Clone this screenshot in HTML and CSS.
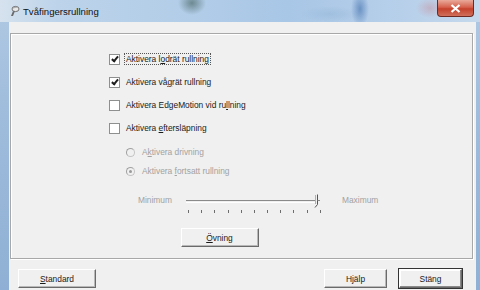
FILE: index.html
```html
<!DOCTYPE html>
<html lang="sv">
<head>
    <meta charset="UTF-8">
    <title>Tvåfingersrullning</title>
    <link rel="stylesheet" href="styles.css">
</head>
<body>

    <div class="window">
        <div class="titlebar">
            <svg class="app-icon" width="12" height="12" viewBox="0 0 12 12">
                <path d="M3 11 L5 6 L7 6 L5 11 Z" fill="#6b6b6b"/>
                <ellipse cx="7.5" cy="4" rx="3.5" ry="2.6" fill="#e8e8e8" stroke="#555" stroke-width="0.8"/>
                <path d="M5 3 L9 2" stroke="#999" stroke-width="0.8"/>
            </svg>
            <span class="title">Tvåfingersrullning</span>
            <div class="close-btn">
                <svg width="11" height="9" viewBox="0 0 11 9">
                    <path d="M1.5 1 L9.5 8 M9.5 1 L1.5 8" stroke="#fff" stroke-width="2.2"/>
                </svg>
            </div>
        </div>

        <div class="frame">
            <div class="client">
                <div class="group">
                    <div class="options">
                        <label class="row">
                            <span class="check checked"></span>
                            <span class="text focused">Aktivera l<u>o</u>drät rullning</span>
                        </label>
                        <label class="row">
                            <span class="check checked"></span>
                            <span class="text">Aktivera vå<u>g</u>rät rullning</span>
                        </label>
                        <label class="row">
                            <span class="check"></span>
                            <span class="text">Aktivera EdgeMotion vid ru<u>l</u>lning</span>
                        </label>
                        <label class="row">
                            <span class="check"></span>
                            <span class="text">Aktivera <u>e</u>ftersläpning</span>
                        </label>

                        <div class="sub-options">
                            <label class="row">
                                <span class="radio"></span>
                                <span class="text disabled">A<u>k</u>tivera drivning</span>
                            </label>
                            <label class="row">
                                <span class="radio selected"></span>
                                <span class="text disabled">Aktivera <u>f</u>ortsatt rullning</span>
                            </label>
                        </div>
                    </div>

                    <div class="slider-row">
                        <span class="disabled">Minimum</span>
                        <div class="slider">
                            <div class="track"></div>
                            <svg class="thumb" width="8" height="15" viewBox="0 0 8 15">
                                <path d="M5.5 0.5 V10.5 L3 13.5" fill="none" stroke="#555" stroke-width="1"/>
                                <path d="M3.5 1 V10" fill="none" stroke="#b0b0b0" stroke-width="1"/>
                                <path d="M5.5 6.5 H8" stroke="#8a8a8a" stroke-width="1"/>
                            </svg>
                            <div class="ticks">
                                <i></i><i></i><i></i><i></i><i></i><i></i><i></i><i></i><i></i><i></i><i></i>
                            </div>
                        </div>
                        <span class="disabled">Maximum</span>
                    </div>

                    <div class="practice">
                        <button class="btn"><u>Ö</u>vning</button>
                    </div>
                </div>

                <div class="footer">
                    <button class="btn"><u>S</u>tandard</button>
                    <div class="footer-right">
                        <button class="btn small">Hjälp</button>
                        <button class="btn small default">Stäng</button>
                    </div>
                </div>
            </div>
        </div>
    </div>

</body>
</html>
```

FILE: styles.css
```css
body {
    margin: 0;
    width: 480px;
    height: 290px;
    overflow: hidden;
    font-family: "Liberation Sans", Arial, sans-serif;
    font-size: 8.4px;
    color: #1a1a1a;
}

.window {
    height: 290px;
    display: flex;
    flex-direction: column;
    background: linear-gradient(to bottom, #b0c9e3, #9fbcdc 40%, #8fb0d4);
}

/* aero title bar */
.titlebar {
    height: 22px;
    display: flex;
    align-items: center;
    padding-left: 8px;
    position: relative;
    background:
        radial-gradient(ellipse 14px 12px at 192px 3px, rgba(40, 70, 60, 0.5), transparent),
        radial-gradient(ellipse 9px 18px at 360px 9px, rgba(50, 100, 165, 0.55), transparent),
        radial-gradient(ellipse 30px 8px at 330px 14px, rgba(140, 175, 210, 0.4), transparent),
        radial-gradient(ellipse 14px 10px at 430px 8px, rgba(200, 120, 130, 0.35), transparent),
        linear-gradient(to right, #d6e2ee, #bcd3ea 12%, #b2cde8 40%, #a8c6e6 60%, #b8d0ea 85%, #c6d9ec);
}

.app-icon {
    margin-right: 3px;
}

.title {
    font-size: 9.6px;
    color: #111;
}

.close-btn {
    position: absolute;
    right: 6px;
    top: 0;
    width: 37px;
    height: 17px;
    border: 1px solid #6e2a22;
    border-top: none;
    border-radius: 0 0 4px 4px;
    background: linear-gradient(to bottom, #e9a99a, #d5624d 45%, #c4412c 55%, #d0705c);
    display: flex;
    align-items: center;
    justify-content: center;
    box-sizing: border-box;
}

.frame {
    flex: 1;
    padding: 0 4px 0 9px;
    display: flex;
}

.client {
    flex: 1;
    background-color: #f0f0f0;
    padding: 11px 3px 0 1px;
    display: flex;
    flex-direction: column;
}

.group {
    height: 224px;
    border: 1px solid #a8a8a8;
    box-shadow: inset 1px 1px #fff, 1px 1px #fff;
    display: flex;
    flex-direction: column;
}

.options {
    padding: 19px 0 0 98px;
    display: flex;
    flex-direction: column;
    gap: 11px;
}

.row {
    display: flex;
    align-items: center;
    height: 12px;
}

.check {
    width: 9px;
    height: 9px;
    border: 1px solid #8e8f8f;
    background: #fff;
    margin-right: 4px;
    position: relative;
}

.check.checked::after {
    content: "";
    position: absolute;
    left: 3px;
    top: 0;
    width: 2px;
    height: 5px;
    border: solid #1e1e1e;
    border-width: 0 2px 2px 0;
    transform: rotate(40deg);
}

.text {
    padding: 0 1px;
    border: 1px solid transparent;
}

.text.focused {
    border: 1px dotted #555;
}

.sub-options {
    display: flex;
    flex-direction: column;
    gap: 7px;
    padding-left: 17px;
    margin-top: 1px;
}

.radio {
    width: 7px;
    height: 7px;
    border-radius: 50%;
    border: 1px solid #c4c4c4;
    border-top-color: #a0a0a0;
    border-left-color: #a0a0a0;
    margin-right: 5px;
    position: relative;
}

.radio.selected::after {
    content: "";
    position: absolute;
    left: 2px;
    top: 2px;
    width: 3px;
    height: 3px;
    border-radius: 50%;
    background: #9a9a9a;
}

.disabled {
    color: #a2a2a2;
}

.slider-row {
    display: flex;
    align-items: flex-start;
    padding: 17px 0 0 127px;
}

.slider-row > span {
    padding-top: 1px;
}

.slider {
    position: relative;
    width: 140px;
    height: 22px;
    margin: 0 16px 0 14px;
}

.track {
    margin-top: 6px;
    width: 130px;
    height: 1px;
    border-top: 1px solid #8a8a8a;
    border-bottom: 1px solid #fff;
}

.thumb {
    position: absolute;
    left: 126px;
    top: 0;
}

.ticks {
    display: flex;
    justify-content: space-between;
    width: 133px;
    margin: 7px 0 0 2px;
}

.ticks i {
    width: 1px;
    height: 3px;
    background: #6e6e6e;
}

.practice {
    display: flex;
    justify-content: center;
    padding: 12px 44px 0 0;
}

.btn {
    font-family: "Liberation Sans", Arial, sans-serif;
    font-size: 8.4px;
    color: #1a1a1a;
    width: 78px;
    height: 19px;
    padding: 0;
    background-color: #f0f0f0;
    border: 1px solid;
    border-color: #fff #6a6a6a #6a6a6a #fff;
    box-shadow: inset -1px -1px #b8b8b8;
}

.footer {
    display: flex;
    justify-content: space-between;
    align-items: center;
    padding: 10px 11px 0 8px;
}

.footer-right {
    display: flex;
    gap: 12px;
}

.btn.small {
    width: 63px;
}

.btn.default {
    outline: 1px solid #333;
    box-shadow: inset -1px -1px #8a8a8a, inset 1px 1px #fff;
}
```
